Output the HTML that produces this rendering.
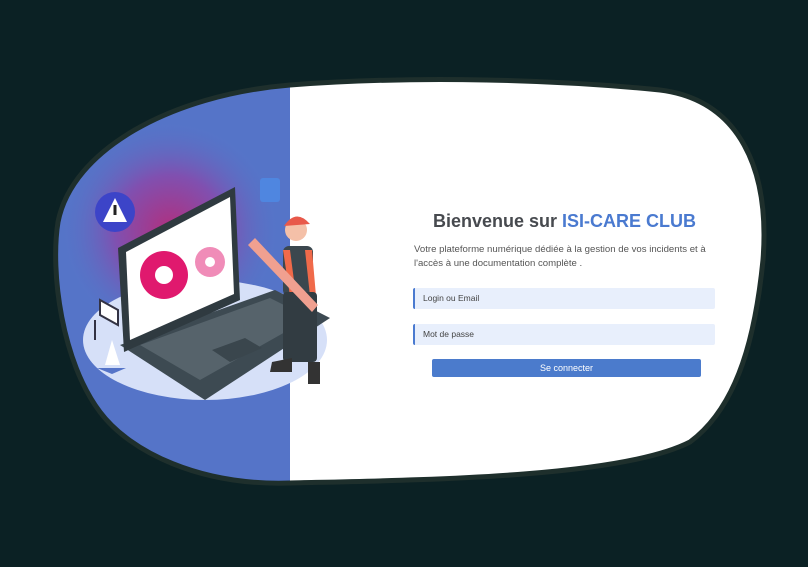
<!DOCTYPE html>
<html><head><meta charset="utf-8"><style>
html,body{margin:0;padding:0;background:#0b2124;width:808px;height:567px;overflow:hidden;font-family:"Liberation Sans",Arial,sans-serif}
svg{position:absolute;left:0;top:0}
h1{position:absolute;left:433px;top:211px;margin:0;font-size:18px;font-weight:bold;color:#474a4f;white-space:nowrap}
h1 span{color:#4a7ad0}
p{position:absolute;left:414px;top:243px;margin:0;width:310px;font-size:9.6px;line-height:14px;color:#555}
.in{position:absolute;left:413px;height:21px;background:#e8effc;border-left:2px solid #4a7ad0;border-radius:2px;font-size:8.5px;color:#444;line-height:21px;padding-left:8px;box-sizing:border-box;width:302px}
.btn{position:absolute;left:432px;top:359px;width:269px;height:18px;background:#4b7bcc;border-radius:2px;color:#fff;font-size:9px;text-align:center;line-height:18px}
</style></head><body>
<svg width="808" height="567" viewBox="0 0 808 567">
<defs>
<clipPath id="b"><path d="M290,85 C420,75 560,80 660,90 C740,100 770,170 763,260 C756,330 740,405 690,442 C620,478 420,480 290,483 C200,486 130,452 100,412 C62,362 50,272 58,222 C72,150 170,95 290,85 Z"/></clipPath>
<radialGradient id="g" cx="170" cy="230" r="110" gradientUnits="userSpaceOnUse"><stop offset="0" stop-color="#b0307f"/><stop offset="0.5" stop-color="#8050b0"/><stop offset="1" stop-color="#5574c8" stop-opacity="0"/></radialGradient>
</defs>
<g clip-path="url(#b)">
<rect x="0" y="0" width="808" height="567" fill="#fff"/>
<rect x="0" y="0" width="290" height="567" fill="#5574c8"/>
<rect x="0" y="0" width="290" height="567" fill="url(#g)"/>
</g>
<path d="M290,85 C420,75 560,80 660,90 C740,100 770,170 763,260 C756,330 740,405 690,442 C620,478 420,480 290,483 C200,486 130,452 100,412 C62,362 50,272 58,222 C72,150 170,95 290,85 Z" fill="none" stroke="#1e2f2c" stroke-width="5"/>
<ellipse cx="205" cy="340" rx="122" ry="60" fill="#d6e0f8"/>
<path d="M120,345 L275,290 L330,318 L205,400 Z" fill="#3d4a52"/>
<path d="M140,345 L270,298 L310,318 L200,380 Z" fill="#56636b"/>
<path d="M212,350 L245,338 L262,348 L230,362 Z" fill="#3a464d"/>
<path d="M118,248 L235,187 L240,300 L124,352 Z" fill="#2f3a40"/>
<path d="M126,252 L230,197 L234,294 L130,340 Z" fill="#fff"/>
<circle cx="164" cy="275" r="24" fill="#e0196e"/><circle cx="164" cy="275" r="9" fill="#fff"/>
<circle cx="210" cy="262" r="15" fill="#f08cb8"/><circle cx="210" cy="262" r="5" fill="#fff"/>
<circle cx="115" cy="212" r="20" fill="#3c44c8"/>
<path d="M115,198 L127,222 L103,222 Z" fill="#fff"/>
<rect x="113.5" y="205" width="3" height="10" fill="#222"/>
<rect x="260" y="178" width="20" height="24" rx="3" fill="#4f86e0"/>
<rect x="283" y="246" width="30" height="50" rx="6" fill="#3b474e"/>
<path d="M283,250 L290,296 L296,296 L290,250Z M305,250 L310,296 L316,296 L312,250Z" fill="#f06a4a"/>
<rect x="283" y="292" width="34" height="70" rx="4" fill="#323c42"/>
<circle cx="296" cy="230" r="11" fill="#f4c0a8"/>
<path d="M284,226 Q296,208 310,224 Z" fill="#e8594a"/>
<path d="M255,238 L318,305 L312,312 L248,245 Z" fill="#f0a090"/>
<path d="M272,362 L292,358 L292,372 L270,372 Z M308,362 L320,362 L320,384 L308,384 Z" fill="#333"/>
<path d="M105,365 L112,340 L120,365 Z" fill="#fff"/><path d="M97,368 L126,368 L112,374 Z" fill="#5574c8"/>
<path d="M95,320 L95,340 M100,300 L118,310 L118,325 L100,315Z" stroke="#334" stroke-width="2" fill="#fff"/>
</svg>
<h1>Bienvenue sur <span>ISI-CARE CLUB</span></h1>
<p>Votre plateforme numérique dédiée à la gestion de vos incidents et à l'accès à une documentation complète .</p>
<div class="in" style="top:288px">Login ou Email</div>
<div class="in" style="top:324px">Mot de passe</div>
<div class="btn">Se connecter</div>
</body></html>
